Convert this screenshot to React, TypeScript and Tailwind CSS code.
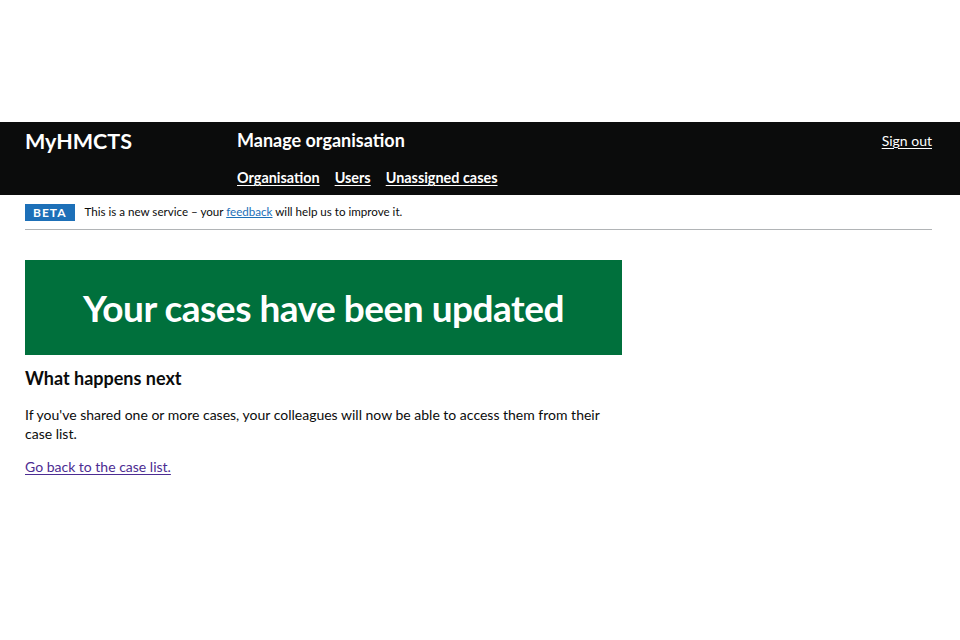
import React from 'react';

const font = { fontFamily: 'Lato, "Noto Sans", Arial, sans-serif' };

const App: React.FC = () => {
  return (
    <div className="min-h-screen bg-white text-[#0b0c0c]" style={font}>
      {/* spacer above header */}
      <div className="h-[122px]" />

      {/* Header */}
      <header className="bg-[#0b0c0c] h-[73px] pl-[25px] pr-[28px] flex">
        <div className="w-[212px] pt-[6px]">
          <a href="#" className="text-white font-bold text-[21.5px] leading-[26px]">MyHMCTS</a>
        </div>
        <div className="flex-1 flex flex-col pt-[7px]">
          <a href="#" className="text-white font-bold text-[18px] leading-[22px]">Manage organisation</a>
          <nav className="flex gap-[15px] mt-[18px]">
            <a href="#" className="text-white font-bold text-[14.4px] leading-[18px] underline underline-offset-2">Organisation</a>
            <a href="#" className="text-white font-bold text-[14.4px] leading-[18px] underline underline-offset-2">Users</a>
            <a href="#" className="text-white font-bold text-[14.4px] leading-[18px] underline underline-offset-2">Unassigned cases</a>
          </nav>
        </div>
        <div className="pt-[9px]">
          <a href="#" className="text-white text-[14px] leading-[18px] underline underline-offset-2 relative -top-[3px]">Sign out</a>
        </div>
      </header>

      {/* Beta banner */}
      <div className="ml-[25px] mr-[28px] border-b border-[#b1b4b6] h-[35px] flex items-center">
        <span className="bg-[#1d70b8] text-white font-bold text-[12px] tracking-[1px] px-[8px] h-[17px] leading-[17px] mr-[10px]">BETA</span>
        <span className="text-[11.6px] leading-[16px]">
          This is a new service – your <a href="#" className="text-[#1d70b8] underline">feedback</a> will help us to improve it.
        </span>
      </div>

      {/* Main */}
      <main className="px-[25px] pt-[30px]">
        <div className="w-[597px]">
          <div className="bg-[#00703c] h-[95px] flex items-center justify-center">
            <h1 className="text-white font-bold text-[37px] leading-[40px] tracking-[-0.5px]">Your cases have been updated</h1>
          </div>
          <h2 className="font-bold text-[18px] leading-[22px] mt-[12px]">What happens next</h2>
          <p className="text-[14px] leading-[19px] mt-[16px]">
            If you've shared one or more cases, your colleagues will now be able to access them from their case list.
          </p>
          <p className="mt-[14px] text-[14px] leading-[19px]">
            <a href="#" className="text-[#4c2c92] underline underline-offset-2">Go back to the case list.</a>
          </p>
        </div>
      </main>
    </div>
  );
};

export default App;
